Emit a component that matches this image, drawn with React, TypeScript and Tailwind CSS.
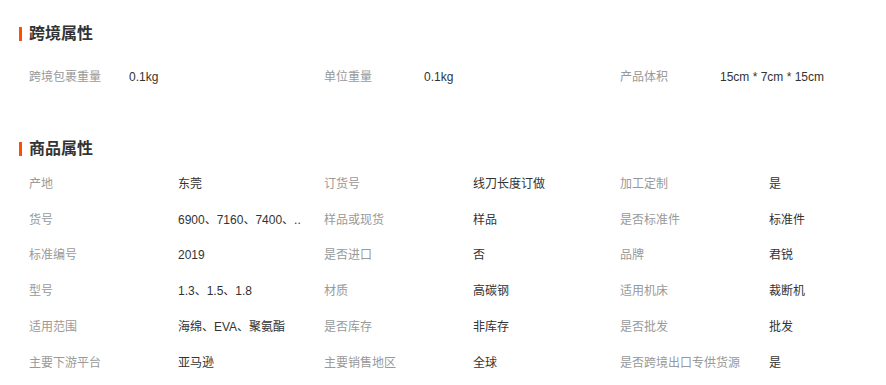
const CROSS_BORDER = [
  { label: "跨境包裹重量", value: "0.1kg" },
  { label: "单位重量", value: "0.1kg" },
  { label: "产品体积", value: "15cm * 7cm * 15cm" },
];

const PRODUCT = [
  { label: "产地", value: "东莞" },
  { label: "订货号", value: "线刀长度订做" },
  { label: "加工定制", value: "是" },
  { label: "货号", value: "6900、7160、7400、.." },
  { label: "样品或现货", value: "样品" },
  { label: "是否标准件", value: "标准件" },
  { label: "标准编号", value: "2019" },
  { label: "是否进口", value: "否" },
  { label: "品牌", value: "君锐" },
  { label: "型号", value: "1.3、1.5、1.8" },
  { label: "材质", value: "高碳钢" },
  { label: "适用机床", value: "裁断机" },
  { label: "适用范围", value: "海绵、EVA、聚氨酯" },
  { label: "是否库存", value: "非库存" },
  { label: "是否批发", value: "批发" },
  { label: "主要下游平台", value: "亚马逊" },
  { label: "主要销售地区", value: "全球" },
  { label: "是否跨境出口专供货源", value: "是" },
];

function SectionTitle({ title }: { title: string }) {
  return (
    <div className="flex h-[24px] items-center">
      <span className="h-[14px] w-[3px] bg-[#ff5000]" />
      <h2 className="ml-[7px] text-[16px] font-bold text-[#333]">{title}</h2>
    </div>
  );
}

export default function App() {
  return (
    <div
      className="h-[385px] w-[886px] overflow-hidden bg-white pl-[19px] pt-[22px]"
      style={{ fontFamily: '"Liberation Sans", "Noto Sans CJK SC", sans-serif' }}
    >
      {/* 跨境属性 */}
      <SectionTitle title="跨境属性" />
      <div className="mt-[13px] grid grid-cols-[295px_296px_296px] pl-[10px]">
        {CROSS_BORDER.map((item) => (
          <div key={item.label} className="flex h-[36px] items-center text-[12px]">
            <span className="w-[100px] text-[#999]">{item.label}</span>
            <span className="text-[#333]">{item.value}</span>
          </div>
        ))}
      </div>

      {/* 商品属性 */}
      <div className="mt-[42px]">
        <SectionTitle title="商品属性" />
      </div>
      <div className="mt-[5px] grid grid-cols-[295px_296px_296px] pl-[10px]">
        {PRODUCT.map((item) => (
          <div key={item.label} className="flex h-[35.8px] items-center text-[12px]">
            <span className="w-[149px] shrink-0 whitespace-nowrap text-[#999]">{item.label}</span>
            <span className="whitespace-nowrap text-[#333]">{item.value}</span>
          </div>
        ))}
      </div>
    </div>
  );
}
